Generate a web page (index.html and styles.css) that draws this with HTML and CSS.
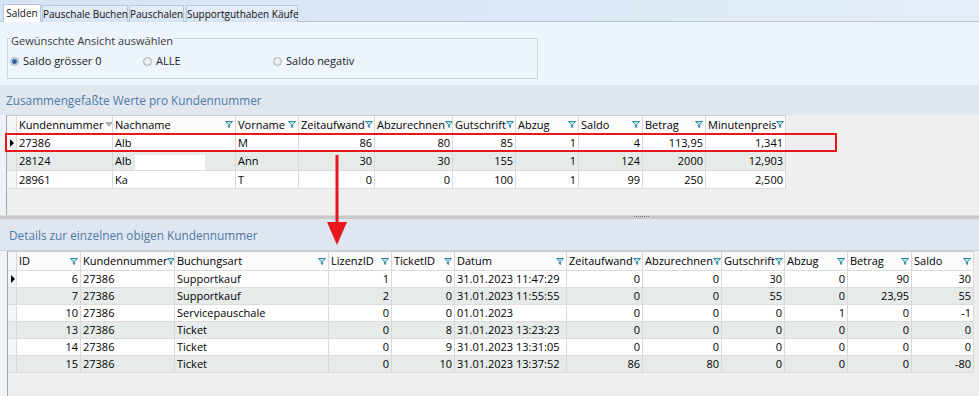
FILE: index.html
```html
<html>
<head>
    <title>Salden</title>
    <meta charset="UTF-8" name="viewport" content="width=device-width, initial-scale=1">
    <link rel="stylesheet" href="styles.css">
</head>

<body>
    <svg class="defs" width="0" height="0">
        <symbol id="flt" viewBox="0 0 8 7">
            <path d="M0.5 0.5 H7.5 L4.6 3.6 V6.5 L3.4 5.9 V3.6 Z" fill="#bfe3ea" stroke="#2f8aa2" stroke-width="1"/>
        </symbol>
    </svg>

    <div class="tabstrip">
        <div class="tab active">Salden</div>
        <div class="tab w86">Pauschale Buchen</div>
        <div class="tab w55">Pauschalen</div>
        <div class="tab w112">Supportguthaben Käufe</div>
    </div>

    <div class="filterpanel">
        <div class="groupbox">
            <span class="caption">Gewünschte Ansicht auswählen</span>
            <div class="radios">
                <label class="radio r1"><span class="circle checked"></span>Saldo grösser 0</label>
                <label class="radio r2"><span class="circle"></span>ALLE</label>
                <label class="radio"><span class="circle"></span>Saldo negativ</label>
            </div>
        </div>
    </div>

    <div class="band">Zusammengefaßte Werte pro Kundennummer</div>

    <div class="gridarea upper">
        <table class="grid summary">
            <colgroup>
                <col style="width:10px"><col style="width:96px"><col style="width:123px"><col style="width:63px">
                <col style="width:76px"><col style="width:78px"><col style="width:63px"><col style="width:63px">
                <col style="width:64px"><col style="width:63px"><col style="width:80px">
            </colgroup>
            <tr class="head">
                <th></th>
                <th><div class="hc start">Kundennummer<span class="sort"></span></div></th>
                <th><div class="hc">Nachname<svg class="flt"><use href="#flt"/></svg></div></th>
                <th><div class="hc">Vorname<svg class="flt"><use href="#flt"/></svg></div></th>
                <th><div class="hc">Zeitaufwand<svg class="flt"><use href="#flt"/></svg></div></th>
                <th><div class="hc">Abzurechnen<svg class="flt"><use href="#flt"/></svg></div></th>
                <th><div class="hc">Gutschrift<svg class="flt"><use href="#flt"/></svg></div></th>
                <th><div class="hc">Abzug<svg class="flt"><use href="#flt"/></svg></div></th>
                <th><div class="hc">Saldo<svg class="flt"><use href="#flt"/></svg></div></th>
                <th><div class="hc">Betrag<svg class="flt"><use href="#flt"/></svg></div></th>
                <th><div class="hc">Minutenpreis<svg class="flt"><use href="#flt"/></svg></div></th>
            </tr>
            <tr>
                <td class="rh"><span class="cur"></span></td>
                <td>27386</td><td>Alb</td><td>M</td>
                <td class="n">86</td><td class="n">80</td><td class="n">85</td><td class="n">1</td>
                <td class="n">4</td><td class="n">113,95</td><td class="n">1,341</td>
            </tr>
            <tr class="alt">
                <td class="rh"></td>
                <td>28124</td><td>Alb<span class="blank"></span></td><td>Ann</td>
                <td class="n">30</td><td class="n">30</td><td class="n">155</td><td class="n">1</td>
                <td class="n">124</td><td class="n">2000</td><td class="n">12,903</td>
            </tr>
            <tr>
                <td class="rh"></td>
                <td>28961</td><td>Ka</td><td>T</td>
                <td class="n">0</td><td class="n">0</td><td class="n">100</td><td class="n">1</td>
                <td class="n">99</td><td class="n">250</td><td class="n">2,500</td>
            </tr>
        </table>
    </div>

    <div class="splitter"><span class="grip"></span></div>

    <div class="band second">Details zur einzelnen obigen Kundennummer</div>

    <div class="gridarea lower">
        <table class="grid details">
            <colgroup>
                <col style="width:9px"><col style="width:64px"><col style="width:94px"><col style="width:154px">
                <col style="width:63px"><col style="width:63px"><col style="width:112px"><col style="width:76px">
                <col style="width:79px"><col style="width:63px"><col style="width:63px"><col style="width:64px">
                <col style="width:62px">
            </colgroup>
            <tr class="head">
                <th></th>
                <th><div class="hc">ID<svg class="flt"><use href="#flt"/></svg></div></th>
                <th><div class="hc">Kundennummer<svg class="flt"><use href="#flt"/></svg></div></th>
                <th><div class="hc">Buchungsart<svg class="flt"><use href="#flt"/></svg></div></th>
                <th><div class="hc">LizenzID<svg class="flt"><use href="#flt"/></svg></div></th>
                <th><div class="hc">TicketID<svg class="flt"><use href="#flt"/></svg></div></th>
                <th><div class="hc">Datum<svg class="flt"><use href="#flt"/></svg></div></th>
                <th><div class="hc">Zeitaufwand<svg class="flt"><use href="#flt"/></svg></div></th>
                <th><div class="hc">Abzurechnen<svg class="flt"><use href="#flt"/></svg></div></th>
                <th><div class="hc">Gutschrift<svg class="flt"><use href="#flt"/></svg></div></th>
                <th><div class="hc">Abzug<svg class="flt"><use href="#flt"/></svg></div></th>
                <th><div class="hc">Betrag<svg class="flt"><use href="#flt"/></svg></div></th>
                <th><div class="hc">Saldo<svg class="flt"><use href="#flt"/></svg></div></th>
            </tr>
            <tr>
                <td class="rh"><span class="cur"></span></td>
                <td class="n">6</td><td>27386</td><td>Supportkauf</td><td class="n">1</td><td class="n">0</td>
                <td>31.01.2023 11:47:29</td><td class="n">0</td><td class="n">0</td><td class="n">30</td>
                <td class="n">0</td><td class="n">90</td><td class="n">30</td>
            </tr>
            <tr class="alt">
                <td class="rh"></td>
                <td class="n">7</td><td>27386</td><td>Supportkauf</td><td class="n">2</td><td class="n">0</td>
                <td>31.01.2023 11:55:55</td><td class="n">0</td><td class="n">0</td><td class="n">55</td>
                <td class="n">0</td><td class="n">23,95</td><td class="n">55</td>
            </tr>
            <tr>
                <td class="rh"></td>
                <td class="n">10</td><td>27386</td><td>Servicepauschale</td><td class="n">0</td><td class="n">0</td>
                <td>01.01.2023</td><td class="n">0</td><td class="n">0</td><td class="n">0</td>
                <td class="n">1</td><td class="n">0</td><td class="n">-1</td>
            </tr>
            <tr class="alt">
                <td class="rh"></td>
                <td class="n">13</td><td>27386</td><td>Ticket</td><td class="n">0</td><td class="n">8</td>
                <td>31.01.2023 13:23:23</td><td class="n">0</td><td class="n">0</td><td class="n">0</td>
                <td class="n">0</td><td class="n">0</td><td class="n">0</td>
            </tr>
            <tr>
                <td class="rh"></td>
                <td class="n">14</td><td>27386</td><td>Ticket</td><td class="n">0</td><td class="n">9</td>
                <td>31.01.2023 13:31:05</td><td class="n">0</td><td class="n">0</td><td class="n">0</td>
                <td class="n">0</td><td class="n">0</td><td class="n">0</td>
            </tr>
            <tr class="alt">
                <td class="rh"></td>
                <td class="n">15</td><td>27386</td><td>Ticket</td><td class="n">0</td><td class="n">10</td>
                <td>31.01.2023 13:37:52</td><td class="n">86</td><td class="n">80</td><td class="n">0</td>
                <td class="n">0</td><td class="n">0</td><td class="n">-80</td>
            </tr>
        </table>
    </div>

    <!-- annotation drawn over the screenshot -->
    <div class="mark"></div>
    <svg class="arrow" width="24" height="94" viewBox="0 0 24 94">
        <line x1="12" y1="0" x2="12" y2="70" stroke="#e8161d" stroke-width="3"/>
        <polygon points="2,67 22,67 12,90" fill="#e8161d"/>
    </svg>
</body>
</html>
```

FILE: styles.css
```css
body {
    margin: 0;
    width: 979px;
    height: 396px;
    overflow: hidden;
    position: relative;
    font-family: "Open Sans", "Noto Sans", sans-serif;
    background-color: #eef3f9;
    color: #000;
}

.defs {
    position: absolute;
}

.tabstrip {
    height: 22px;
    box-sizing: border-box;
    display: flex;
    align-items: flex-end;
    padding-left: 3px;
    background: linear-gradient(to right, #d5e4f4, #dde9f6 60%, #e4edf7);
    border-bottom: 1px solid #b7c7d9;
}

.tab {
    width: 38px;
    height: 17px;
    margin-right: 1px;
    margin-bottom: -1px;
    box-sizing: border-box;
    border: 1px solid #b7c7d9;
    border-bottom: none;
    background: linear-gradient(#e6eef8, #d6e3f1);
    font-size: 10px;
    line-height: 16px;
    text-align: center;
    white-space: nowrap;
    color: #111;
}

.tab.active {
    height: 18px;
    background: #fff;
}

.w86 { width: 86px; }
.w55 { width: 55px; margin-right: 2px; }
.w112 { width: 112px; }

.filterpanel {
    height: 63px;
    box-sizing: border-box;
    padding-top: 16px;
    background-color: #edf4fc;
}

.groupbox {
    margin-left: 7px;
    width: 531px;
    height: 41px;
    box-sizing: border-box;
    border: 1px solid #cfd6df;
}

.caption {
    display: inline-block;
    margin: -7px 0 0 2px;
    padding: 0 1px;
    vertical-align: top;
    background-color: #edf4fc;
    font-size: 11px;
    line-height: 18px;
    color: #3a3a3a;
}

.radios {
    display: flex;
    margin-top: 3px;
    padding-left: 2px;
    font-size: 11px;
    line-height: 16px;
    color: #222;
}

.radio {
    display: flex;
    align-items: center;
}

.r1 { width: 133px; }
.r2 { width: 130px; }

.circle {
    width: 7px;
    height: 7px;
    margin-right: 4px;
    border: 1px solid #a9b1ba;
    border-radius: 50%;
    background: radial-gradient(#f6f6f6, #d9dcdf);
    box-sizing: content-box;
}

.circle.checked {
    background: radial-gradient(circle, #1f4f86 0, #3c6fa8 2px, #cfd8e2 3px, #eef0f2 4px);
}

.band {
    height: 30px;
    padding-left: 6px;
    line-height: 31px;
    font-size: 11.8px;
    color: #4f7aa7;
    background-color: #e1e7ef;
}

.band.second {
    height: 31px;
    padding-left: 9px;
    line-height: 32px;
    background-color: #dfe6ef;
    border-bottom: 1px solid #c9d1db;
}

.gridarea {
    background-color: #efefef;
    border-left: 1px solid #a8a8a8;
}

.gridarea.upper {
    margin-left: 6px;
    height: 100px;
}

.gridarea.lower {
    margin-left: 7px;
    height: 146px;
}

.grid {
    border-collapse: separate;
    border-spacing: 0;
    table-layout: fixed;
    border-top: 1px solid #c8ced6;
    font-size: 11px;
}

.grid.summary {
    width: 779px;
}

.grid.details {
    width: 966px;
}

.grid th,
.grid td {
    padding: 0 2px;
    border-right: 1px solid #d9d9d9;
    border-bottom: 1px solid #dcdcdc;
    white-space: nowrap;
    overflow: hidden;
    line-height: 17px;
    font-weight: normal;
    text-align: left;
    background-color: #fff;
}

.grid.details td {
    line-height: 16px;
}

.grid.details th {
    line-height: 18px;
}

.grid .head th {
    background-color: #fbfbfb;
}

.grid .alt td {
    background-color: #e6ebea;
}

.grid td.n {
    text-align: right;
}

.grid .rh,
.grid .head th:first-child {
    padding: 0;
    background-color: #f6f6f6;
}

.hc {
    display: flex;
    justify-content: space-between;
    align-items: center;
}

.hc.start {
    justify-content: flex-start;
}

.flt {
    width: 8px;
    height: 7px;
    flex-shrink: 0;
}

.sort {
    width: 0;
    height: 0;
    margin-left: 2px;
    border-left: 4px solid transparent;
    border-right: 4px solid transparent;
    border-top: 5px solid #b0b0b0;
}

.cur {
    display: block;
    width: 0;
    height: 0;
    margin-left: 3px;
    border-top: 4px solid transparent;
    border-bottom: 4px solid transparent;
    border-left: 4px solid #000;
}

.blank {
    display: inline-block;
    width: 70px;
    height: 15px;
    margin-left: 4px;
    vertical-align: middle;
    background-color: #fff;
}

.splitter {
    height: 3px;
    border-top: 1px solid #dadada;
    background-color: #c9c9c9;
    display: flex;
    padding-left: 634px;
}

.grip {
    width: 16px;
    height: 1px;
    background: repeating-linear-gradient(to right, #7a7a7a 0, #7a7a7a 1px, transparent 1px, transparent 2px);
}

.mark {
    position: absolute;
    left: 5px;
    top: 133px;
    width: 832px;
    height: 19px;
    box-sizing: border-box;
    border: 2px solid #e8161d;
}

.arrow {
    position: absolute;
    left: 325px;
    top: 155px;
}
```
